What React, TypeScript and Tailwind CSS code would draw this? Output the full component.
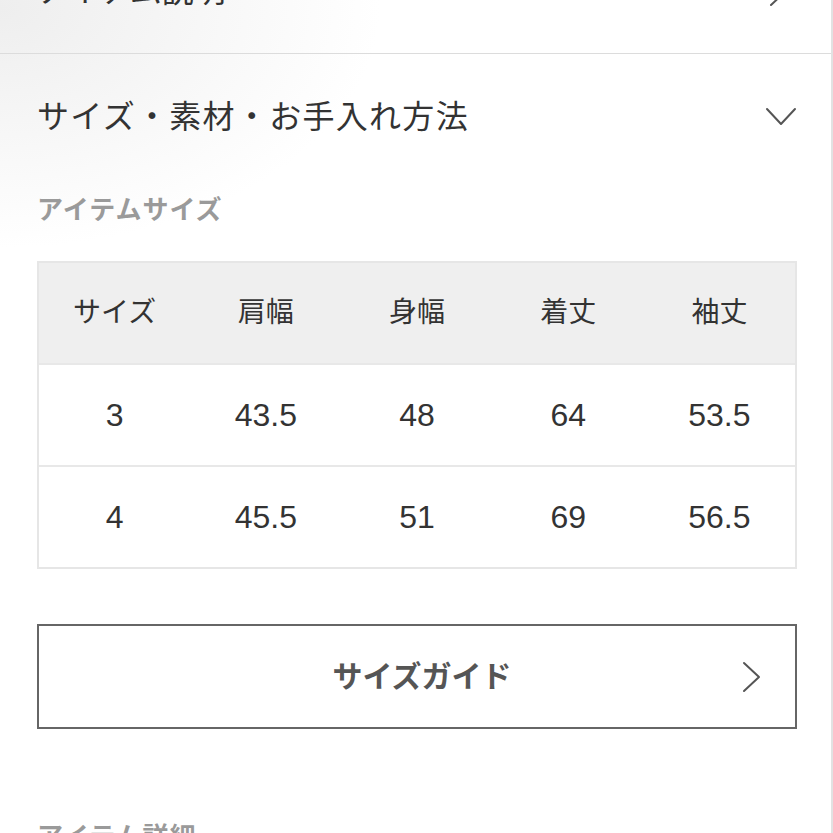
import React from "react";

const jp = { fontFamily: '"Liberation Sans", "Noto Sans CJK JP", sans-serif' };

function ChevronRight({ className = "" }: { className?: string }) {
  return (
    <svg className={className} width="20" height="32" viewBox="0 0 20 32" fill="none">
      <path d="M2 2 L17 16 L2 30" stroke="#555" strokeWidth="2" strokeLinecap="round" strokeLinejoin="round" />
    </svg>
  );
}

function ChevronDown() {
  return (
    <svg width="32" height="20" viewBox="0 0 32 20" fill="none">
      <path d="M2 2 L16 17 L30 2" stroke="#555" strokeWidth="2" strokeLinecap="round" strokeLinejoin="round" />
    </svg>
  );
}

const headers = ["サイズ", "肩幅", "身幅", "着丈", "袖丈"];
const rows = [
  ["3", "43.5", "48", "64", "53.5"],
  ["4", "45.5", "51", "69", "56.5"],
];

export default function App() {
  return (
    <div className="w-[833px] h-[833px] overflow-hidden bg-white" style={jp}>
      <div className="w-[833px] border-r-2 border-[#e2e2e2] bg-[radial-gradient(ellipse_380px_240px_at_0px_80px,#eeeeee,#ffffff00)] mt-[-72px]">
        {/* top row */}
        <div className="h-[126px] flex items-center justify-between pl-[37px] pr-[42px] border-b border-[#dcdcdc]">
          <span className="text-[32px] text-[#333] leading-none">アイテム説明</span>
          <ChevronRight />
        </div>

        {/* section header */}
        <div className="h-[126px] flex items-center justify-between pl-[37px] pr-[34px]">
          <span className="text-[32px] tracking-[1.3px] text-[#333] leading-none">サイズ・素材・お手入れ方法</span>
          <ChevronDown />
        </div>

        <div className="pl-[37px] pr-[34px]">
          <div className="h-[81px] pb-[21px] flex items-center">
            <span className="text-[26px] tracking-[1px] font-bold text-[#9a9a9a] leading-none">アイテムサイズ</span>
          </div>

          {/* table */}
          <div className="border-2 border-[#e6e6e6]">
            <div className="grid grid-cols-5 h-[100px] bg-[#efefef] items-center text-center text-[28px] text-[#333]">
              {headers.map((h) => (
                <div key={h}>{h}</div>
              ))}
            </div>
            {rows.map((r, i) => (
              <div
                key={i}
                className="grid grid-cols-5 h-[102px] border-t-2 border-[#e8e8e8] items-center text-center text-[32px] text-[#333]"
              >
                {r.map((c, j) => (
                  <div key={j}>{c}</div>
                ))}
              </div>
            ))}
          </div>

          {/* button */}
          <div className="mt-[55px] h-[105px] border-2 border-[#666] relative flex items-center justify-center">
            <span className="text-[30px] font-bold text-[#555] ml-[10px]">サイズガイド</span>
            <div className="absolute right-[33px] top-1/2 -translate-y-1/2 flex">
              <ChevronRight />
            </div>
          </div>

          <div className="mt-[95px]">
            <span className="text-[26px] tracking-[1px] font-bold text-[#9a9a9a] leading-none">アイテム詳細</span>
          </div>
        </div>
      </div>
    </div>
  );
}
